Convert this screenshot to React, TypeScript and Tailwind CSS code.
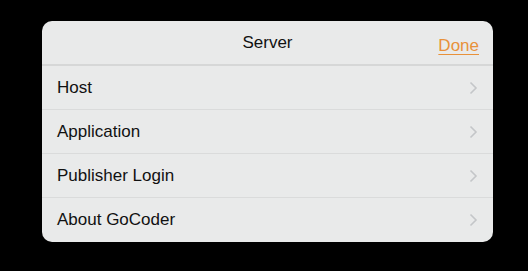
import React from 'react';

const rows = ['Host', 'Application', 'Publisher Login', 'About GoCoder'];

const Chevron: React.FC = () => (
  <svg width="9" height="14" viewBox="0 0 9 14" fill="none" className="shrink-0">
    <path d="M1.5 1.5 L7 7 L1.5 12.5" stroke="#c4c6c8" strokeWidth="1.6" />
  </svg>
);

export default function App() {
  return (
    <div className="w-[528px] h-[271px] bg-black pt-[21px] pl-[42px]" style={{ fontFamily: '"Liberation Sans", Arial, sans-serif' }}>
      <div className="w-[451px] rounded-[10px] bg-[#e9eaea] overflow-hidden">
        {/* Header */}
        <div className="relative h-[45px] flex items-center justify-center border-b-2 border-[#d6d7d7]">
          <span className="text-[17px] text-[#111] pt-[1px]">Server</span>
          <span className="absolute right-[14px] top-[12px] text-[17px] text-[#e8913a] underline underline-offset-[3px]">Done</span>
        </div>
        {rows.map((r, i) => (
          <div
            key={r}
            className={`h-[44px] flex items-center justify-between pl-[15px] pr-[15px] ${i < rows.length - 1 ? 'border-b border-[#dadbdb]' : ''}`}
          >
            <span className="text-[17px] text-[#111]">{r}</span>
            <Chevron />
          </div>
        ))}
      </div>
    </div>
  );
}
